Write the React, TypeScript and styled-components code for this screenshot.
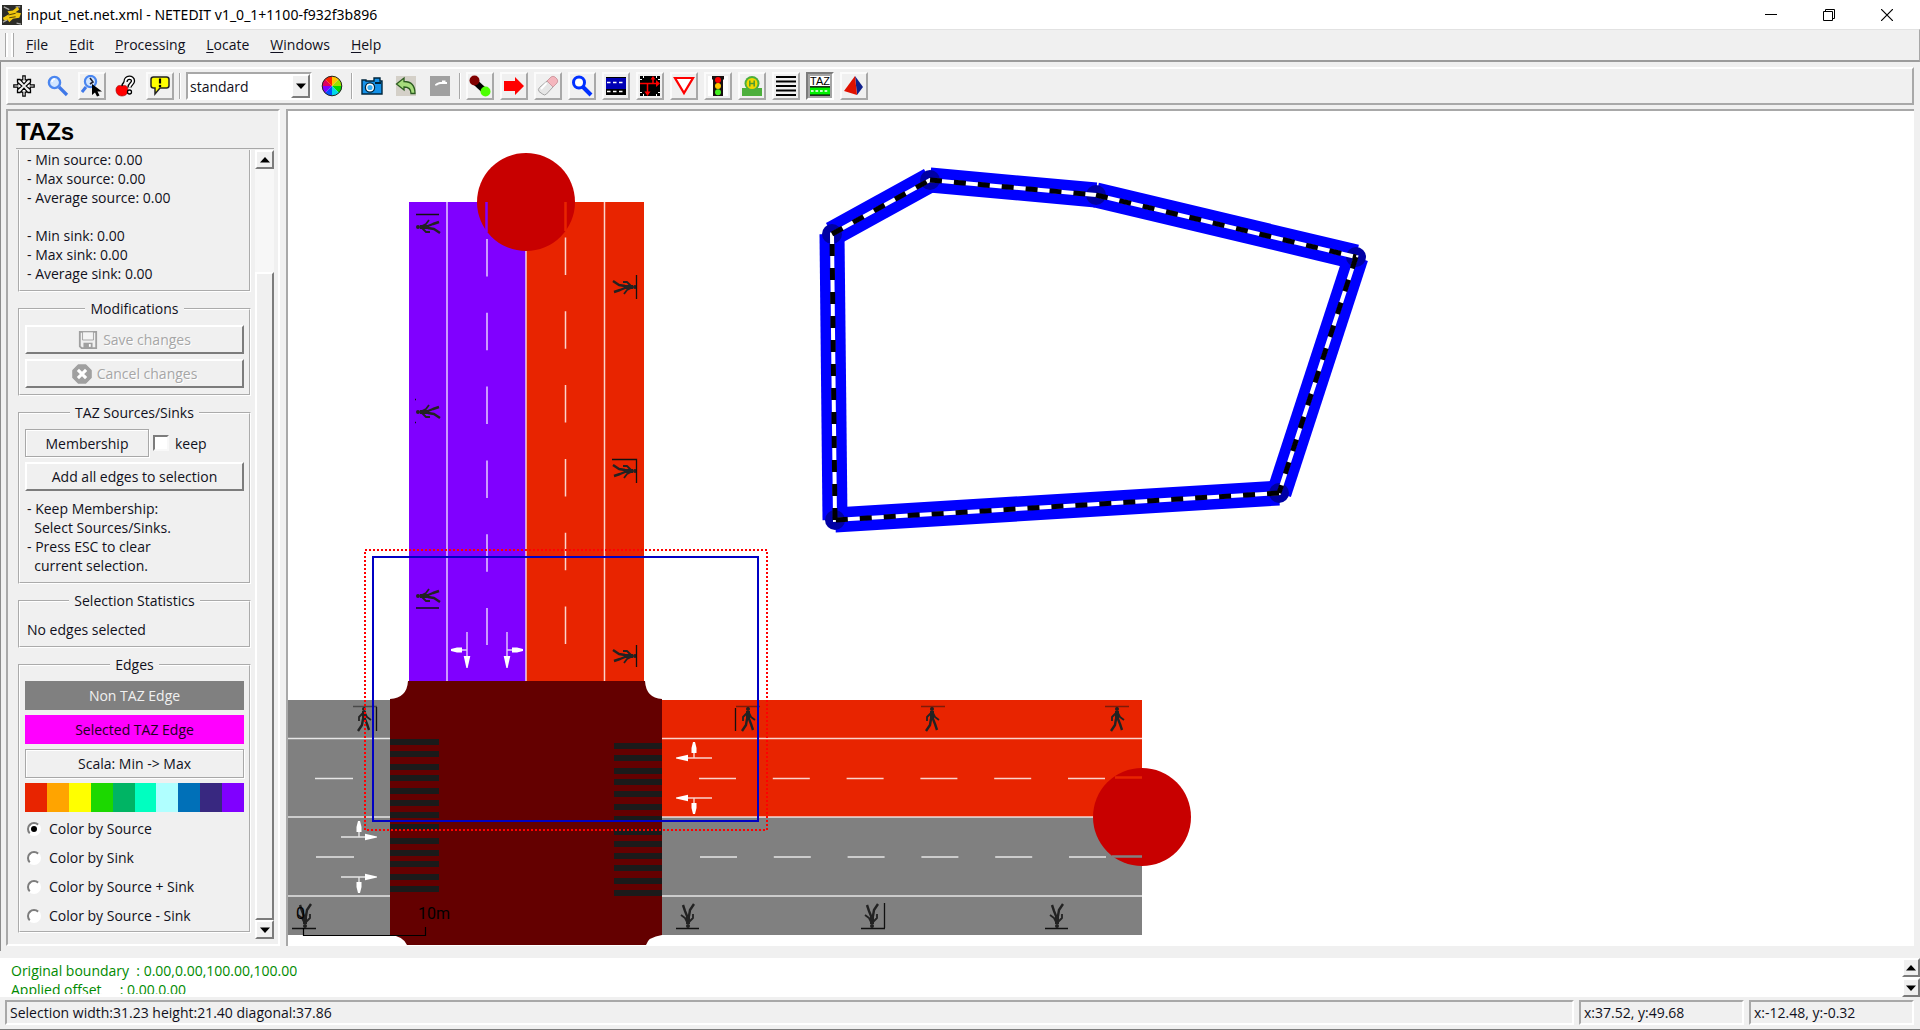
import React, { useState } from "react";
import styled, { createGlobalStyle, css } from "styled-components";

const FACE = "#f0f0f0";
const SHADOW = "#a8a8a8";
const DARK = "#7c7c7c";

const GlobalStyle = createGlobalStyle`
  * { box-sizing: border-box; }
  body {
    margin: 0;
    background: ${FACE};
    color: #101020;
    font: 14px/19px "Open Sans", "Noto Sans", sans-serif;
  }
  button, select, input { font: inherit; color: inherit; }
`;

const raised = css`
  border: 2px solid;
  border-color: #fff ${DARK} ${DARK} #fff;
`;
const softRaised = css`
  border: 2px solid;
  border-color: #fbfbfb ${SHADOW} ${SHADOW} #fbfbfb;
`;
const sunken = css`
  border: 2px solid;
  border-color: ${SHADOW} #fff #fff ${SHADOW};
`;

const Window = styled.div`
  display: flex;
  flex-direction: column;
  height: 100vh;
  min-height: 700px;
  overflow: hidden;
`;

const TitleBar = styled.header`
  display: flex;
  align-items: center;
  height: 29px;
  padding: 0 4px 0 2px;
  background: #fff;
  color: #000;
`;
const Title = styled.h1`
  flex: 1;
  margin: 0 0 0 5px;
  font-family: "Noto Sans", "Open Sans", sans-serif;
  font-size: 14px;
  font-weight: 400;
`;
const WindowButton = styled.button`
  display: grid;
  place-items: center;
  width: 58px;
  height: 28px;
  padding: 0;
  border: 0;
  background: none;
`;

const MenuBar = styled.nav`
  display: flex;
  align-items: center;
  gap: 21px;
  height: 33px;
  padding: 0 0 1px 5px;
  border-top: 1px solid #e2e2e2;
  border-bottom: 2px solid #9c9c9c;
  border-right: 1px solid ${SHADOW};
`;
const Grip = styled.span`
  width: 9px;
  height: 24px;
  margin-right: -9px;
  border: solid ${SHADOW};
  border-width: 0 1px;
  box-shadow: inset 2px 0 #fff, inset -2px 0 #fff;
`;
const MenuItem = styled.button`
  padding: 0;
  border: 0;
  background: none;
  u { text-underline-offset: 2px; }
`;

const Body = styled.div`
  display: flex;
  flex: 1;
  flex-direction: column;
  gap: 4px;
  min-height: 0;
  padding: 5px 6px 5px 5px;
  border-left: 1px solid #8c8c8c;
`;
const ToolBar = styled.div`
  display: flex;
  align-items: center;
  gap: 6px;
  height: 38px;
  padding-left: 2px;
  border: 2px solid;
  border-color: #fff ${SHADOW} ${SHADOW} #fff;
`;
const ToolButton = styled.button<{ $flat?: boolean; $on?: boolean }>`
  display: grid;
  flex: none;
  place-items: center;
  width: 28px;
  height: 28px;
  padding: 0;
  background: ${(p) => (p.$on ? "#a4a4a4" : FACE)};
  ${softRaised}
  ${(p) => p.$flat && "border-color: transparent;"}
  ${(p) => p.$on && `border-color: ${DARK} #fff #fff ${DARK};`}
`;
const Divider = styled.span`
  width: 2px;
  height: 26px;
  margin: 0 -1px;
  border-left: 1px solid ${SHADOW};
  border-right: 1px solid #fff;
`;
const Scheme = styled.div`
  display: flex;
  width: 126px;
  height: 28px;
  background: #fff;
  ${sunken}
`;
const SchemeSelect = styled.select`
  flex: 1;
  min-width: 0;
  padding: 0 0 0 2px;
  border: 0;
  border-radius: 0;
  background: #fff;
  appearance: none;
`;
const SchemeArrow = styled.span`
  display: grid;
  place-items: center;
  width: 19px;
  background: ${FACE};
  ${raised}
`;

const Main = styled.div`
  display: flex;
  flex: 1;
  gap: 6px;
  min-height: 0;
`;
const SidePanel = styled.aside`
  display: flex;
  flex: none;
  flex-direction: column;
  width: 274px;
  padding: 0 4px 0 8px;
  ${sunken}
`;
const PanelTitle = styled.h2`
  margin: 0;
  padding: 5px 0 0;
  height: 38px;
  border-bottom: 1px solid ${SHADOW};
  color: #000;
  font-family: "Liberation Sans", Arial, sans-serif;
  font-size: 24px;
  font-weight: 700;
  line-height: 32px;
`;
const PanelScroll = styled.div`
  display: flex;
  flex: 1;
  justify-content: space-between;
  min-height: 0;
  overflow: hidden;
  padding: 1px 0 5px 2px;
`;
const Groups = styled.div`
  display: flex;
  flex-direction: column;
  gap: 7px;
  width: 233px;
`;
const Group = styled.fieldset<{ $cut?: boolean }>`
  min-width: 0;
  margin: 0;
  padding: ${(p) => (p.$cut ? "0 5px 7px" : "6px 5px")};
  border: 2px groove #fff;
  ${(p) => p.$cut && "border-top: 0;"}
`;
const Legend = styled.legend`
  margin: 0 auto;
  padding: 0 5px;
  line-height: 20px;
`;
const Stack = styled.div`
  display: flex;
  flex-direction: column;
  gap: 5px;
`;
const Note = styled.p<{ $tall?: boolean }>`
  margin: 0;
  padding: ${(p) => (p.$tall ? "3px 2px 1px" : "0 2px")};
  white-space: pre;
`;
const PushButton = styled.button`
  display: flex;
  align-items: center;
  justify-content: center;
  gap: 5px;
  height: 29px;
  padding: 0;
  background: ${FACE};
  ${raised}
  &:disabled { color: #a6a6a6; text-shadow: 1px 1px #fff; }
`;
const Row = styled.div`
  display: flex;
  align-items: center;
  gap: 4px;
`;
const ToggleButton = styled.button`
  width: 124px;
  height: 28px;
  padding: 0;
  background: ${FACE};
  border: 1px solid ${SHADOW};
  box-shadow: inset 1px 1px #fff, 1px 1px #fff;
`;
const CheckLabel = styled.label`
  display: flex;
  align-items: center;
  gap: 6px;
`;
const CheckBox = styled.input`
  width: 16px;
  height: 16px;
  margin: 0;
  background: #fff;
  appearance: none;
  border: 2px solid;
  border-color: ${DARK} #f8f8f8 #f8f8f8 ${DARK};
`;
const Swatch = styled.div<{ $bg: string; $fg: string }>`
  height: 29px;
  background: ${(p) => p.$bg};
  color: ${(p) => p.$fg};
  line-height: 29px;
  text-align: center;
`;
const ScaleLabel = styled.div`
  height: 29px;
  border: 1px solid ${SHADOW};
  box-shadow: inset 1px 1px #fff, 1px 1px #fff;
  line-height: 27px;
  text-align: center;
`;
const Scale = styled.div`
  display: flex;
  height: 29px;
`;
const ScaleStep = styled.span<{ $bg: string }>`
  flex: 1;
  background: ${(p) => p.$bg};
`;
const Choices = styled.div`
  display: flex;
  flex-direction: column;
  margin-bottom: -5px;
  padding-top: 2px;
`;
const Choice = styled.label`
  display: flex;
  align-items: center;
  gap: 8px;
  height: 29px;
  padding-left: 2px;
`;
const Radio = styled.input`
  display: grid;
  place-items: center;
  width: 14px;
  height: 14px;
  margin: 0;
  appearance: none;
  border: 2px solid;
  border-color: ${DARK} #fff #fff ${DARK};
  border-radius: 50%;
  background: #fff;
  &:checked::before {
    content: "";
    width: 6px;
    height: 6px;
    border-radius: 50%;
    background: #000;
  }
`;
const ScrollBar = styled.div`
  display: flex;
  flex-direction: column;
  width: 19px;
  background: #f7f7f7;
`;
const ScrollTrack = styled.div`
  flex: 104;
`;
const ScrollThumb = styled.div`
  flex: 649;
  background: ${FACE};
  ${raised}
`;
const ScrollButton = styled.button`
  display: grid;
  place-items: center;
  height: 19px;
  padding: 0;
  background: ${FACE};
  ${raised}
`;

const View = styled.main`
  flex: 1;
  min-width: 0;
  background: #fff;
  ${sunken}
  border-right: 0;
  border-bottom: 0;
`;
const Scene = styled.svg`
  display: block;
  width: 100%;
  height: 100%;
`;

const Messages = styled.section`
  display: flex;
  flex: none;
  justify-content: space-between;
  height: 46px;
  padding-left: 11px;
  border-top: 7px solid ${FACE};
  background: #fff;
`;
const Log = styled.pre`
  height: 36px;
  margin: 0;
  padding-top: 3px;
  overflow: hidden;
  color: #008a00;
  font: inherit;
`;
const LogScroll = styled.div`
  display: flex;
  flex-direction: column;
  justify-content: space-between;
  width: 18px;
  button { height: 19px; }
`;
const StatusBar = styled.footer`
  display: flex;
  flex: none;
  gap: 5px;
  height: 33px;
  padding: 3px 6px 4px 5px;
  border-bottom: 1px solid ${DARK};
`;
const StatusCell = styled.div<{ $wide?: boolean }>`
  flex: ${(p) => (p.$wide ? "1" : "0 0 165px")};
  padding-left: 3px;
  line-height: 22px;
  ${sunken}
`;

const Up = () => (
  <svg width="10" height="6"><path d="M0 5.5 5 0l5 5.5z" fill="#000" /></svg>
);
const Down = () => (
  <svg width="10" height="6"><path d="M0 .5 5 6l5-5.5z" fill="#000" /></svg>
);

const Icon = ({ children, size = 22 }: { children: React.ReactNode; size?: number }) => (
  <svg width={size} height={size} viewBox="0 0 22 22" aria-hidden="true">{children}</svg>
);

const MoveArrow = ({ a }: { a: number }) => (
  <path transform={`rotate(${a} 11 11)`} d="M9.800 .8h2.400v4h2.300L11 8.800 7.500 4.800h2.300z" fill="#fff" stroke="#000" strokeWidth="1.200" />
);

const icons: Record<string, React.ReactNode> = {
  recenter: (
    <Icon>
      {[0, 90, 180, 270].map((a) => <MoveArrow key={a} a={a} />)}
      <path d="M4.500 7.500v-3h3M14.500 4.500h3v3M4.500 14.500v3h3M14.500 17.500h3v-3" fill="none" stroke="#000" strokeWidth="1.300" />
    </Icon>
  ),
  zoom: (
    <Icon>
      <path d="M12 12l8 8" stroke="#3f78e8" strokeWidth="3.200" />
      <circle cx="7.500" cy="7.500" r="5.600" fill="#d2e6ff" stroke="#4a86f0" strokeWidth="2.400" />
      <path d="M5 7a3 3 0 0 1 3-3" stroke="#fff" strokeWidth="1.500" fill="none" />
    </Icon>
  ),
  zoomStyle: (
    <Icon>
      <path d="M5 12l-4 5" stroke="#3f78e8" strokeWidth="3" />
      <circle cx="9.500" cy="6.500" r="5.600" fill="#d2e6ff" stroke="#4a86f0" strokeWidth="2.200" />
      <path d="M9 3l3 4-3 2" stroke="#223" strokeWidth="1.600" fill="none" />
      <path d="M11 9v11l3-2.500 2 4 2.500-1-2-4h4.500z" fill="#000" />
    </Icon>
  ),
  help: (
    <Icon>
      <path d="M7 11c-3-1.500-6 0-6 4 0 3 2 6 6 6s6-3 6-6c0-4-3-5.500-6-4z" fill="#f00" stroke="#900" strokeWidth=".6" />
      <path d="M7 11c0-2 1-3 2-4" stroke="#000" strokeWidth="1.500" fill="none" />
      <path d="M10.500 7c0-5.500 7.500-5.500 7.500-1 0 3-3.500 3-3.500 6.500" fill="none" stroke="#000" strokeWidth="4.400" />
      <path d="M10.500 7c0-5.500 7.500-5.500 7.500-1 0 3-3.500 3-3.500 6.500" fill="none" stroke="#fff" strokeWidth="1.800" />
      <circle cx="14.500" cy="17" r="2" fill="#fff" stroke="#000" strokeWidth="1.300" />
    </Icon>
  ),
  tip: (
    <Icon>
      <path d="M4.500 2h13q2.500 0 2.500 2.500v6q0 2.500-2.500 2.500H11l-5 6v-6H4.500Q2 13 2 10.500v-6Q2 2 4.500 2z" fill="#ff0" stroke="#222" strokeWidth="1.500" />
      <path d="M11 3.500v5" stroke="#000" strokeWidth="2.200" />
      <circle cx="11" cy="11" r="1.300" fill="#000" />
    </Icon>
  ),
  wheel: (
    <Icon>
      {["#ffc400", "#9be000", "#00d800", "#00d8e8", "#0050ff", "#8000ff", "#e00060", "#ff2000"].map((c, i) => {
        const t = (k: number) => ((k * 45 - 90) * Math.PI) / 180;
        return (
          <path key={c} fill={c} d={`M11 11L${11 + 10 * Math.cos(t(i))} ${11 + 10 * Math.sin(t(i))}A10 10 0 0 1 ${11 + 10 * Math.cos(t(i + 1))} ${11 + 10 * Math.sin(t(i + 1))}z`} />
        );
      })}
      <circle cx="11" cy="11" r="9.800" fill="none" stroke="#222" strokeWidth="1" />
    </Icon>
  ),
  camera: (
    <Icon>
      <path d="M1 5h4v1h8V3h6v3h2v13H1z" fill="#1492ea" stroke="#00263c" strokeWidth="1.400" />
      <circle cx="9" cy="12.500" r="4.600" fill="#fff" stroke="#00263c" strokeWidth="1.300" />
      <circle cx="9" cy="12.500" r="2.600" fill="#38b0f4" />
      <path d="M14 7h6v2h-6z" fill="#00263c" />
    </Icon>
  ),
  undo: (
    <Icon>
      <path d="M1 1h20v20H1z" fill="#d4d0c8" />
      <path d="M1.500 9L9 3v3.500c7 0 11 4 11 12h-4c0-4-2-6.500-7-6.500V15z" fill="#a6dc7c" stroke="#2c5c20" strokeWidth="1.300" />
    </Icon>
  ),
  redo: (
    <Icon>
      <path d="M1 1h20v20H1z" fill="#a0a0a0" />
      <path d="M6 9.500c2-2 4-2.500 7-2.500V5.500h3.500v1.500h1.500v2h-4V9c-3 0-5 0-6 1.500H6z" fill="#fff" />
    </Icon>
  ),
  create: (
    <Icon>
      <path d="M5 6l12 11" stroke="#000" strokeWidth="6" />
      <circle cx="5.500" cy="5.500" r="5" fill="#800000" />
      <circle cx="16.500" cy="16.500" r="5" fill="#4cff00" />
    </Icon>
  ),
  move: <Icon><path d="M1 6h11V2l9 9-9 9v-4H1z" fill="#f00" /></Icon>,
  erase: (
    <Icon>
      <path d="M10 6l6 6-6.500 7q-2 2-4 0L2 16.500q-1.500-2 .5-4z" fill="#e6e6e6" stroke="#a4a4a4" />
      <path d="M10 6l4-4q2-1.500 4 0l2 2q1.500 2 0 4l-4 4z" fill="#f4b6bd" stroke="#cf9ba2" />
      <path d="M4 14l5.500-6" stroke="#fff" strokeWidth="2" />
    </Icon>
  ),
  inspect: (
    <Icon>
      <path d="M12 12l8 8" stroke="#0030ff" strokeWidth="4" />
      <circle cx="8" cy="7.500" r="5.500" fill="#fff" stroke="#0030ff" strokeWidth="3" />
    </Icon>
  ),
  select: (
    <Icon>
      <path d="M1 2h20v18H1z" fill="#000" />
      <path d="M1 3h20v11H1z" fill="#0000b4" />
      <path d="M2 7.500h18M2 16.500h18" stroke="#fff" strokeWidth="1.600" strokeDasharray="3.500 2.500" />
    </Icon>
  ),
  connect: (
    <Icon>
      <path d="M1 1h20v20H1z" fill="#000" />
      <path d="M1 4.500h20M1 17.500h20M4.500 1v20M17.500 1v20" stroke="#fff" strokeWidth="1" strokeDasharray="2 16" />
      <path d="M1 8.500h17M8.500 8.500V19M14 8V2" stroke="#f00" strokeWidth="1.500" fill="none" />
      <path d="M17 5l4 3.500-4 3.500zM5.500 16.500h6L8.500 21zM11.500 4.500L14 1l2.500 3.500z" fill="#f00" />
    </Icon>
  ),
  prohibit: <Icon><path d="M2 3h18L11 18z" fill="#fff" stroke="#f00" strokeWidth="2.200" /></Icon>,
  lights: (
    <Icon>
      <path d="M1 1h20v20H1z" fill="#fff" />
      <path d="M5 1h12v3l-1 1v16H6V5L5 4z" fill="#181010" />
      <circle cx="11" cy="5" r="3" fill="#f00" />
      <circle cx="11" cy="11" r="3" fill="#ffc800" />
      <circle cx="11" cy="17.300" r="3" fill="#44f020" />
    </Icon>
  ),
  additional: (
    <Icon>
      <path d="M1 13h20v8H1z" fill="#4caf3c" />
      <circle cx="11" cy="8.500" r="7.500" fill="#4caf3c" />
      <circle cx="11" cy="8.500" r="5.500" fill="#f0d800" />
      <path d="M8.800 5.500v6M13.200 5.500v6M8.800 8.500h4.400" stroke="#4c9a30" strokeWidth="1.500" />
    </Icon>
  ),
  crossing: <Icon><path d="M1 2h20M1 6.500h20M1 11h20M1 15.500h20M1 20h20" stroke="#000" strokeWidth="2" /></Icon>,
  taz: (
    <Icon size={20}>
      <path d="M0 0h22v11H0z" fill="#fff" />
      <text x="11" y="10" textAnchor="middle" fontFamily="Liberation Sans, Arial, sans-serif" fontSize="12">TAZ</text>
      <path d="M0 12h22v9H0z" fill="#00f000" />
      <path d="M0 12h22M0 21h22" stroke="#000" strokeWidth="1.200" />
      <path d="M1 16.500h20" stroke="#fff" strokeWidth="1.400" strokeDasharray="3 2" />
    </Icon>
  ),
  shape: (
    <Icon>
      <path d="M12 1l8 11-6 8z" fill="#10208c" />
      <path d="M12 1l2 19-13-4z" fill="#e01000" />
    </Icon>
  ),
  logo: (
    <Icon size={20}>
      <path d="M0 0h22v22H0z" fill="#2c2c28" />
      <path d="M2 2l6 3M1 19l5-3M16 20l5 1M15 2h5" stroke="#aaa" strokeWidth="1.500" />
      <path d="M1 14l7-4-2-3 6-1 5-4 2 3-4 3 6 1-2 5-7 1-4 4-2-3-4 1z" fill="#f0c810" />
      <path d="M7 11l8-2M8 14l7-1" stroke="#5c4800" strokeWidth="1.200" />
    </Icon>
  ),
  save: (
    <Icon size={20}>
      <path d="M2 2h18v18H4l-2-2z" fill="none" stroke="#a0a0a0" strokeWidth="2" />
      <path d="M5 2h12v9H5z" fill="#f4f4f4" stroke="#a0a0a0" />
      <path d="M6 14h10v6H6z" fill="#a0a0a0" />
      <path d="M12 15.500h2v3h-2z" fill="#fff" />
    </Icon>
  ),
  cancel: (
    <Icon size={20}>
      <path d="M7 1h8l6 6v8l-6 6H7l-6-6V7z" fill="#a0a0a0" stroke="#a0a0a0" strokeWidth="1.500" strokeLinejoin="round" />
      <path d="M6.500 6.500l9 9M15.500 6.500l-9 9" stroke="#fff" strokeWidth="3.400" />
    </Icon>
  ),
};

type Tool = { icon: string; label: string; flat?: boolean; on?: boolean };
const viewTools: Tool[] = [
  { icon: "recenter", label: "Recenter view", flat: true },
  { icon: "zoom", label: "Zoom", flat: true },
  { icon: "zoomStyle", label: "Zoom style" },
  { icon: "help", label: "Locate", flat: true },
  { icon: "tip", label: "Tool tips" },
];
const editTools: Tool[] = [
  { icon: "camera", label: "Snapshot", flat: true },
  { icon: "undo", label: "Undo", flat: true },
  { icon: "redo", label: "Redo", flat: true },
];
const modeTools: Tool[] = [
  { icon: "create", label: "Create edge" },
  { icon: "move", label: "Move" },
  { icon: "erase", label: "Delete" },
  { icon: "inspect", label: "Inspect" },
  { icon: "select", label: "Select" },
  { icon: "connect", label: "Connection" },
  { icon: "prohibit", label: "Prohibition" },
  { icon: "lights", label: "Traffic light" },
  { icon: "additional", label: "Additional" },
  { icon: "crossing", label: "Crossing" },
  { icon: "taz", label: "TAZ mode", on: true },
  { icon: "shape", label: "Polygon" },
];
const Tools = ({ list }: { list: Tool[] }) => (
  <>
    {list.map((t) => (
      <ToolButton key={t.icon} $flat={t.flat} $on={t.on} aria-label={t.label}>{icons[t.icon]}</ToolButton>
    ))}
  </>
);

/* Network drawing, in window coordinates */
const RED = "#e82400";
const PURPLE = "#8000ff";
const GRAY = "#808080";
const JUNCTION = "#640000";

const Walker = ({ x, y, a = 0 }: { x: number; y: number; a?: number }) => (
  <g transform={`translate(${x} ${y}) rotate(${a})`} fill="none" stroke="#222" strokeLinejoin="round">
    <circle cx="0" cy="-10" r="2" fill="#222" stroke="none" />
    <path d="M0-8V1" strokeWidth="4" />
    <path d="M-1-6L-5-2-5 2M1-6L3-2 7 1" strokeWidth="1.800" />
    <path d="M-1 0L-2 6-6 12M1 0L3 5 5 11" strokeWidth="2.400" />
  </g>
);

/* A straight arrow with a side branch; side is 1 (right) or -1 (left) */
const TurnArrow = ({ x, y, a, side }: { x: number; y: number; a: number; side: number }) => (
  <g transform={`translate(${x} ${y}) rotate(${a}) scale(1 ${side})`} fill="#fff">
    <path d="M-36 0H-8M-18 0V9" stroke="#fff" strokeOpacity=".8" strokeWidth="1.400" />
    <path d="M-12-3.300L0-.6V.6L-12 3.300z" />
    <path d="M-20.500 5h5v5l-1.500 6h-2l-1.500-6z" />
  </g>
);

const taz = [[832, 234], [930, 180], [1096, 195], [1356, 257], [1279, 493], [835, 520]];
const tazPath = "M" + taz.map((p) => p.join(" ")).join("L") + "z";
const leftStripes = [742, 754, 767, 778, 791, 803, 815, 827, 841, 853, 864, 877, 889];
const rightStripes = [746, 758, 771, 782, 794, 807, 819, 832, 844, 856, 868, 881, 893];
const walkers: [number, number, number][] = [
  [428, 227, -90], [428, 412, -90], [428, 596, -90],
  [625, 287, 90], [625, 471, 90], [625, 656, 90],
  [364, 719, 0], [748, 719, 0], [932, 719, 0], [1117, 719, 0],
  [305, 916, 180], [688, 916, 180], [872, 916, 180], [1057, 916, 180],
];

const Network = () => (
  <Scene role="img" aria-label="Road network">
    <g transform="translate(-288 -111)">
      <path d="M409 202h117v480H409z" fill={PURPLE} />
      <path d="M526 202h118v480H526z" fill={RED} />
      <path d="M280 700h111v235H280z" fill={GRAY} />
      <path d="M662 700h480v118H662z" fill={RED} />
      <path d="M662 817h480v118H662z" fill={GRAY} />

      <g stroke="#fff" strokeWidth="1.500" strokeOpacity=".8" fill="none">
        <path d="M447 202V682M526 202V682M604.500 202V682" />
        <path d="M280 738.500H390M280 817H390M280 896H390" />
        <path d="M662 738.500H1142M662 817H1142M662 896H1142" />
        <path d="M487 239V645" strokeDasharray="37.500 36.300" />
        <path d="M565.500 237.500V644" strokeDasharray="37.500 36.300" />
        <path d="M315 778.500h38M316 857h38" />
        <path d="M699 778.500H1105" strokeDasharray="37 36.800" />
        <path d="M700 857H1107" strokeDasharray="37 36.800" />
      </g>

      <circle cx="526" cy="202" r="49" fill="#c80000" />
      <circle cx="1142" cy="817" r="49" fill="#c80000" />
      <path d="M486.500 202V232" stroke={PURPLE} strokeWidth="2.500" />
      <path d="M565.500 202V231" stroke={RED} strokeWidth="2.500" />
      <path d="M1115 777.500H1142" stroke={RED} strokeWidth="2.500" />
      <path d="M1112 856.500H1142" stroke={GRAY} strokeWidth="2.500" />

      <path d="M408 681H645Q646 698 662 699V935Q648 937 646 945H407Q403 936 390 935V699Q407 698 408 681z" fill={JUNCTION} />
      <g fill="#1a1a1a">
        {leftStripes.map((y) => <rect key={y} x="390" y={y - 3} width="49" height="6" />)}
        {rightStripes.map((y) => <rect key={y} x="614" y={y - 3} width="48" height="6" />)}
      </g>

      <TurnArrow x={377} y={837} a={0} side={-1} />
      <TurnArrow x={377} y={877} a={0} side={1} />
      <TurnArrow x={676} y={758} a={180} side={1} />
      <TurnArrow x={676} y={798} a={180} side={-1} />
      <TurnArrow x={467} y={668} a={90} side={1} />
      <TurnArrow x={507} y={668} a={90} side={-1} />

      {walkers.map(([x, y, a]) => <Walker key={`${x}-${y}`} x={x} y={y} a={a} />)}
      <g stroke="#111" strokeWidth="1.300" fill="none">
        <path d="M416 214.500H439M416 608H439" />
        <path d="M636.500 275V299M612 459.500H636.500V483M636.500 645V667" />
        <path d="M735.500 708V731M884.500 903V928M376.500 707V731" />
        <path d="M676 928.500H699M861 928.500H885M1045 928.500H1068M292 928.500H316" />
        <path d="M353 706.500H377M736 706.500H760M921 706.500H945M1105 706.500H1129" strokeOpacity=".5" />
        <path d="M415 399.500h1M415 422.500h1" />
      </g>

      <path d="M303.500 928V935.500H425.500V927" fill="none" stroke="#000" strokeWidth="1.200" />
      <g fontFamily="Roboto, sans-serif" fontSize="16" fill="#000">
        <text x="296" y="919">0</text>
        <text x="418" y="919">10m</text>
      </g>

      <rect x="373" y="557" width="385" height="264" fill="none" stroke="#0000c4" strokeWidth="2" />
      <rect x="365" y="550" width="402" height="280" fill="none" stroke="#f00" strokeWidth="2" strokeDasharray="2 2" />

      {taz.map((p, i) => {
        const q = taz[(i + 1) % taz.length];
        return <line key={i} x1={p[0]} y1={p[1]} x2={q[0]} y2={q[1]} stroke="#00f" strokeWidth="25" />;
      })}
      {taz.map((p, i) => <circle key={i} cx={p[0]} cy={p[1]} r="10" fill="#0000a4" />)}
      <path d={tazPath} fill="none" stroke="#fff" strokeWidth="4" />
      {taz.map((p, i) => {
        const q = taz[(i + 1) % taz.length];
        return <line key={i} x1={p[0]} y1={p[1]} x2={q[0]} y2={q[1]} stroke="#000" strokeWidth="5" strokeDasharray="12" />;
      })}
    </g>
  </Scene>
);

const menus = ["File", "Edit", "Processing", "Locate", "Windows", "Help"];
const scale = ["#e82400", "#ffa400", "#ffff00", "#1cd800", "#00b464", "#00ffc0", "#b0ffff", "#0070b8", "#382880", "#8000ff"];
const colorModes = ["Color by Source", "Color by Sink", "Color by Source + Sink", "Color by Source - Sink"];

export default function App() {
  const [mode, setMode] = useState(colorModes[0]);
  return (
    <Window>
      <GlobalStyle />
      <TitleBar>
        {icons.logo}
        <Title>input_net.net.xml - NETEDIT v1_0_1+1100-f932f3b896</Title>
        <WindowButton aria-label="Minimize">
          <svg width="12" height="12"><path d="M0 5.500h12" stroke="#000" /></svg>
        </WindowButton>
        <WindowButton aria-label="Restore">
          <svg width="12" height="12" fill="none" stroke="#000"><path d="M.5 2.500h9v9h-9zM2.500 2.500v-2h9v9h-2" /></svg>
        </WindowButton>
        <WindowButton aria-label="Close">
          <svg width="12" height="12"><path d="M0 0l12 12M12 0L0 12" stroke="#000" strokeWidth="1.200" /></svg>
        </WindowButton>
      </TitleBar>

      <MenuBar>
        <Grip />
        {menus.map((m) => (
          <MenuItem key={m}><u>{m[0]}</u>{m.slice(1)}</MenuItem>
        ))}
      </MenuBar>

      <Body>
        <ToolBar>
          <Tools list={viewTools} />
          <Divider />
          <Scheme>
            <SchemeSelect aria-label="Coloring scheme"><option>standard</option></SchemeSelect>
            <SchemeArrow><Down /></SchemeArrow>
          </Scheme>
          <ToolButton $flat aria-label="Edit coloring">{icons.wheel}</ToolButton>
          <Divider />
          <Tools list={editTools} />
          <Divider />
          <Tools list={modeTools} />
        </ToolBar>

        <Main>
          <SidePanel>
            <PanelTitle>TAZs</PanelTitle>
            <PanelScroll>
              <Groups>
                <Group $cut aria-label="TAZ statistics">
                  <Note>{"- Min source: 0.00\n- Max source: 0.00\n- Average source: 0.00\n\n- Min sink: 0.00\n- Max sink: 0.00\n- Average sink: 0.00"}</Note>
                </Group>
                <Group>
                  <Legend>Modifications</Legend>
                  <Stack>
                    <PushButton disabled>{icons.save}Save changes</PushButton>
                    <PushButton disabled>{icons.cancel}Cancel changes</PushButton>
                  </Stack>
                </Group>
                <Group>
                  <Legend>TAZ Sources/Sinks</Legend>
                  <Stack>
                    <Row>
                      <ToggleButton>Membership</ToggleButton>
                      <CheckLabel><CheckBox type="checkbox" />keep</CheckLabel>
                    </Row>
                    <PushButton>Add all edges to selection</PushButton>
                    <Note $tall>{"- Keep Membership:\n  Select Sources/Sinks.\n- Press ESC to clear\n  current selection."}</Note>
                  </Stack>
                </Group>
                <Group>
                  <Legend>Selection Statistics</Legend>
                  <Note $tall>No edges selected</Note>
                </Group>
                <Group>
                  <Legend>Edges</Legend>
                  <Stack>
                    <Swatch $bg={GRAY} $fg="#f0f0f0">Non TAZ Edge</Swatch>
                    <Swatch $bg="#ff00ff" $fg="#200020">Selected TAZ Edge</Swatch>
                    <ScaleLabel>{"Scala: Min -> Max"}</ScaleLabel>
                    <Scale>{scale.map((c) => <ScaleStep key={c} $bg={c} />)}</Scale>
                  </Stack>
                  <Choices>
                    {colorModes.map((m) => (
                      <Choice key={m}>
                        <Radio type="radio" name="color-mode" checked={mode === m} onChange={() => setMode(m)} />
                        {m}
                      </Choice>
                    ))}
                  </Choices>
                </Group>
              </Groups>
              <ScrollBar>
                <ScrollButton aria-label="Scroll panel up"><Up /></ScrollButton>
                <ScrollTrack />
                <ScrollThumb />
                <ScrollButton aria-label="Scroll panel down"><Down /></ScrollButton>
              </ScrollBar>
            </PanelScroll>
          </SidePanel>
          <View><Network /></View>
        </Main>
      </Body>

      <Messages>
        <Log>{"Original boundary  : 0.00,0.00,100.00,100.00\nApplied offset     : 0.00,0.00"}</Log>
        <LogScroll>
          <ScrollButton aria-label="Scroll messages up"><Up /></ScrollButton>
          <ScrollButton aria-label="Scroll messages down"><Down /></ScrollButton>
        </LogScroll>
      </Messages>
      <StatusBar>
        <StatusCell $wide>Selection width:31.23 height:21.40 diagonal:37.86</StatusCell>
        <StatusCell>x:37.52, y:49.68</StatusCell>
        <StatusCell>x:-12.48, y:-0.32</StatusCell>
      </StatusBar>
    </Window>
  );
}
